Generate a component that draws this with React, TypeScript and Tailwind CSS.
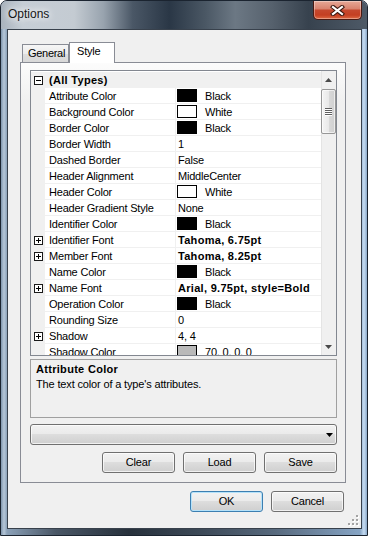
import React from "react";

type Row = {
  n: string;
  v: string;
  sw?: string;
  b?: boolean;
  ex?: boolean;
};

const rows: Row[] = [
  { n: "Attribute Color", sw: "#000000", v: "Black" },
  { n: "Background Color", sw: "#ffffff", v: "White" },
  { n: "Border Color", sw: "#000000", v: "Black" },
  { n: "Border Width", v: "1" },
  { n: "Dashed Border", v: "False" },
  { n: "Header Alignment", v: "MiddleCenter" },
  { n: "Header Color", sw: "#ffffff", v: "White" },
  { n: "Header Gradient Style", v: "None" },
  { n: "Identifier Color", sw: "#000000", v: "Black" },
  { n: "Identifier Font", v: "Tahoma, 6.75pt", b: true, ex: true },
  { n: "Member Font", v: "Tahoma, 8.25pt", b: true, ex: true },
  { n: "Name Color", sw: "#000000", v: "Black" },
  { n: "Name Font", v: "Arial, 9.75pt, style=Bold", b: true, ex: true },
  { n: "Operation Color", sw: "#000000", v: "Black" },
  { n: "Rounding Size", v: "0" },
  { n: "Shadow", v: "4, 4", ex: true },
  { n: "Shadow Color", sw: "#b9b9b9", v: "70, 0, 0, 0" },
];

function ExpandBox({ plus }: { plus: boolean }) {
  return (
    <svg width="9" height="9" viewBox="0 0 9 9" shapeRendering="crispEdges" className="block">
      <rect x="0.5" y="0.5" width="8" height="8" fill="#fff" stroke="#1a1a1a" />
      <line x1="2" y1="4.5" x2="7" y2="4.5" stroke="#000" />
      {plus && <line x1="4.5" y1="2" x2="4.5" y2="7" stroke="#000" />}
    </svg>
  );
}

function WinButton({ label, primary }: { label: string; primary?: boolean }) {
  return (
    <div
      className={
        primary
          ? "w-[73px] h-[21px] rounded-[3px] border border-[#3c7fb1] bg-[linear-gradient(180deg,#f2f2f2_0%,#ebebeb_45%,#dddddd_50%,#cfcfcf_100%)] shadow-[inset_0_0_0_1px_#b5e2fa] flex items-center justify-center text-[11px] leading-[15px] tracking-[-0.2px] text-black"
          : "w-[73px] h-[21px] rounded-[3px] border border-[#707070] bg-[linear-gradient(180deg,#f2f2f2_0%,#ebebeb_45%,#dddddd_50%,#cfcfcf_100%)] shadow-[inset_0_0_0_1px_rgba(255,255,255,0.7)] flex items-center justify-center text-[11px] leading-[15px] tracking-[-0.2px] text-black"
      }
    >
      {label}
    </div>
  );
}

export default function App() {
  return (
    <div className="w-[368px] h-[536px] overflow-hidden font-['Liberation_Sans',Arial,sans-serif] text-black">
      <div className="relative w-full h-full flex flex-col rounded-t-[7px] overflow-hidden border border-[#1b2430] bg-[linear-gradient(90deg,#7f95ac_0px,#b6c7d8_3px,#8ba1b8_6px,#4a5766_15%,#27313c_35%,#3d4a58_55%,#586a7e_75%,#86a4c4_calc(100%_-_7px),#c6dcf2_calc(100%_-_3px),#8aa8c8_100%)]">
        {/* Title bar */}
        <div className="h-[28px] shrink-0 flex justify-between items-start bg-[linear-gradient(90deg,#a9b3bd_0%,#c6ced6_6%,#c4cbd2_20%,#98a3ae_28%,#4a5766_36%,#2a3746_46%,#4b5865_56%,#6c7884_64%,#56616d_74%,#37424e_84%,#4e5a67_100%)]">
          <div className="pl-[7px] pt-[6px] text-[12px] leading-[15px] text-[#161616] [text-shadow:0_0_6px_#ffffff,0_0_10px_#ffffff]">
            Options
          </div>
          <div className="mr-[5px] w-[49px] h-[19px] rounded-b-[5px] border border-t-0 border-[#4a1a12] bg-[linear-gradient(180deg,#e6a897_0%,#d98470_42%,#c5482e_52%,#c43f22_78%,#dd6a44_100%)] shadow-[inset_0_0_0_1px_rgba(255,255,255,0.35)] flex items-center justify-center">
            <svg width="15" height="11" viewBox="0 0 15 11">
              <path d="M3 2 L12 9 M12 2 L3 9" stroke="#3b1810" strokeWidth="4.2" strokeLinecap="square" />
              <path d="M3 2 L12 9 M12 2 L3 9" stroke="#ffffff" strokeWidth="2.2" strokeLinecap="square" />
            </svg>
          </div>
        </div>

        {/* Client area */}
        <div className="relative ml-[6px] mr-[5px] mb-[6px] flex-1 border border-[#38414c] bg-[#f0f0f0] flex flex-col pl-[12px] pt-[12px]">
          {/* Tabs */}
          <div className="flex items-end h-[20px]">
            <div className="ml-[2px] w-[47px] h-[18px] border border-b-0 border-[#898c95] bg-[linear-gradient(180deg,#f6f6f6_0%,#ececec_50%,#dedede_51%,#d8d8d8_100%)] pl-[5px] text-[11px] leading-[16px] tracking-[-0.3px]">
              General
            </div>
            <div className="relative z-10 w-[46px] h-[21px] -mb-px border border-b-0 border-[#898c95] bg-white pl-[7px] text-[11px] leading-[16px] tracking-[-0.2px]">
              Style
            </div>
          </div>

          {/* Tab panel */}
          <div className="w-[326px] h-[421px] border border-[#898c95] bg-[linear-gradient(180deg,#fcfcfc_0px,#f0f0f0_40px)] flex flex-col pl-[9px] pt-[7px]">
            {/* Property grid */}
            <div className="w-[307px] h-[286px] shrink-0 border border-[#828790] bg-white flex text-[11px] leading-[16px]">
              <div className="flex-1 flex flex-col pt-px overflow-hidden">
                {/* Category row */}
                <div className="h-[16px] shrink-0 flex bg-[#f0f0f0]">
                  <div className="w-[14px] shrink-0 pl-[3px] pt-[4px]">
                    <ExpandBox plus={false} />
                  </div>
                  <div className="flex-1 pl-[4px] font-bold tracking-[0.3px]">(All Types)</div>
                </div>
                {rows.map((r) => (
                  <div key={r.n} className="h-[16px] shrink-0 flex">
                    <div className="w-[14px] shrink-0 bg-[#f0f0f0] pl-[3px] pt-[4px]">
                      {r.ex && <ExpandBox plus={true} />}
                    </div>
                    <div className="w-[131px] shrink-0 border-b border-r border-[#f0f0f0] pl-[4px] whitespace-nowrap overflow-hidden tracking-[-0.2px]">
                      {r.n}
                    </div>
                    <div className="flex-1 border-b border-[#f0f0f0] flex items-start whitespace-nowrap overflow-hidden">
                      {r.sw ? (
                        <>
                          <div
                            className="ml-px mt-px w-[20px] h-[13px] shrink-0 border border-black"
                            style={{ backgroundColor: r.sw }}
                          />
                          <span className="ml-[8px] tracking-[-0.2px]">{r.v}</span>
                        </>
                      ) : (
                        <span
                          className={
                            r.b
                              ? "pl-[2px] font-bold tracking-[0.3px]"
                              : "pl-[2px] tracking-[-0.2px]"
                          }
                        >
                          {r.v}
                        </span>
                      )}
                    </div>
                  </div>
                ))}
              </div>
              {/* Scrollbar */}
              <div className="w-[15px] shrink-0 flex flex-col bg-[#f0f0f0] shadow-[inset_1px_0_0_#e4e4e4]">
                <div className="h-[18px] shrink-0 flex items-center justify-center">
                  <svg width="7" height="4" viewBox="0 0 7 4" className="block">
                    <polygon points="3.5,0 7,4 0,4" fill="#4a4a4a" />
                  </svg>
                </div>
                <div className="h-[45px] shrink-0 rounded-[2px] border border-[#979797] bg-[linear-gradient(90deg,#f4f4f4_0%,#e9e9e9_50%,#d9d9d9_51%,#d0d0d0_100%)] shadow-[inset_0_0_0_1px_rgba(255,255,255,0.6)] flex items-center justify-center">
                  <svg width="7" height="8" viewBox="0 0 7 8" shapeRendering="crispEdges" className="block">
                    <line x1="0" y1="0.5" x2="7" y2="0.5" stroke="#5e5e5e" />
                    <line x1="0" y1="2.5" x2="7" y2="2.5" stroke="#5e5e5e" />
                    <line x1="0" y1="4.5" x2="7" y2="4.5" stroke="#5e5e5e" />
                    <line x1="0" y1="6.5" x2="7" y2="6.5" stroke="#5e5e5e" />
                    <line x1="0" y1="1.5" x2="7" y2="1.5" stroke="#ffffff" />
                    <line x1="0" y1="3.5" x2="7" y2="3.5" stroke="#ffffff" />
                    <line x1="0" y1="5.5" x2="7" y2="5.5" stroke="#ffffff" />
                    <line x1="0" y1="7.5" x2="7" y2="7.5" stroke="#ffffff" />
                  </svg>
                </div>
                <div className="flex-1" />
                <div className="h-[17px] shrink-0 flex items-center justify-center">
                  <svg width="7" height="4" viewBox="0 0 7 4" className="block">
                    <polygon points="0,0 7,0 3.5,4" fill="#4a4a4a" />
                  </svg>
                </div>
              </div>
            </div>

            {/* Description */}
            <div className="mt-[3px] w-[307px] h-[59px] shrink-0 border border-[#a0a0a0] bg-[#f0f0f0] pl-[5px] pt-[2px] text-[11px] leading-[15px]">
              <div className="font-bold tracking-[0.3px]">Attribute Color</div>
              <div className="tracking-[-0.15px]">The text color of a type's attributes.</div>
            </div>

            {/* Combobox */}
            <div className="mt-[6px] w-[307px] h-[21px] shrink-0 rounded-[3px] border border-[#707070] bg-[linear-gradient(180deg,#f2f2f2_0%,#ebebeb_45%,#dddddd_50%,#cfcfcf_100%)] shadow-[inset_0_0_0_1px_rgba(255,255,255,0.7)] flex items-center justify-end pr-[3px]">
              <svg width="7" height="4" viewBox="0 0 7 4" className="block">
                <polygon points="0,0 7,0 3.5,4" fill="#000000" />
              </svg>
            </div>

            {/* Clear / Load / Save */}
            <div className="mt-[7px] w-[307px] flex justify-end gap-[8px]">
              <WinButton label="Clear" />
              <WinButton label="Load" />
              <WinButton label="Save" />
            </div>
          </div>

          {/* OK / Cancel */}
          <div className="mt-[8px] w-[326px] flex justify-end gap-[8px] pr-[2px]">
            <WinButton label="OK" primary />
            <WinButton label="Cancel" />
          </div>

          {/* Size grip */}
          <div className="absolute right-[2px] bottom-[2px]">
            <svg width="11" height="11" viewBox="0 0 11 11" shapeRendering="crispEdges" className="block">
              {[
                [8, 0],
                [8, 4],
                [4, 4],
                [8, 8],
                [4, 8],
                [0, 8],
              ].map(([x, y]) => (
                <g key={`${x}-${y}`}>
                  <rect x={x + 1} y={y + 1} width="2" height="2" fill="#ffffff" />
                  <rect x={x} y={y} width="2" height="2" fill="#a3a3a3" />
                </g>
              ))}
            </svg>
          </div>
        </div>
      </div>
    </div>
  );
}
